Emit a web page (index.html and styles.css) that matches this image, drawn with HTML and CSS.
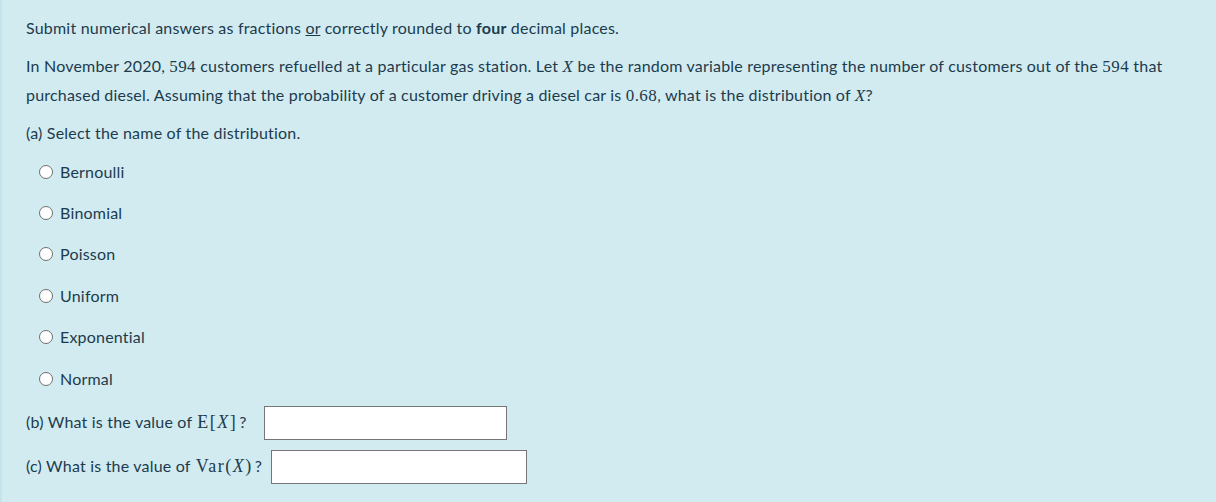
FILE: index.html
```html
<!DOCTYPE html>
<html>
<head>
<meta charset="utf-8">
<link rel="stylesheet" href="styles.css">
</head>
<body>
<div class="panel">
  <p class="line first">Submit numerical answers as fractions <u>or</u> correctly rounded to <b>four</b> decimal places.</p>
  <p class="para">In November 2020, <span class="m">594</span> customers refuelled at a particular gas station. Let <span class="m i">X</span> be the random variable representing the number of customers out of the <span class="m">594</span> that<br>purchased diesel. Assuming that the probability of a customer driving a diesel car is <span class="m">0.68</span>, what is the distribution of <span class="m i">X</span>?</p>
  <p class="line">(a) Select the name of the distribution.</p>
  <ul class="options">
    <li><span class="radio"></span><span>Bernoulli</span></li>
    <li><span class="radio"></span><span>Binomial</span></li>
    <li><span class="radio"></span><span>Poisson</span></li>
    <li><span class="radio"></span><span>Uniform</span></li>
    <li><span class="radio"></span><span>Exponential</span></li>
    <li><span class="radio"></span><span>Normal</span></li>
  </ul>
  <div class="q qb"><span class="qt">(b) What is the value of <span class="m qm">E[<span class="i">X</span>]</span>?</span><span class="box w1"></span></div>
  <div class="q qc"><span class="qt">(c) What is the value of <span class="m qm">Var(<span class="i">X</span>)</span>?</span><span class="box w2"></span></div>
</div>
</body>
</html>
```
FILE: styles.css
```css
html, body { margin: 0; padding: 0; }
body {
  width: 1216px;
  height: 502px;
  overflow: hidden;
  background: #d1ebf1;
  font-family: "Lato", "Noto Sans", sans-serif;
  font-size: 16px;
  letter-spacing: 0.2px;
  color: #1d3b4d;
}
.panel {
  box-sizing: border-box;
  height: 502px;
  border-left: 2px solid #c3e4ec;
  padding: 14px 0 0 24px;
}
p { margin: 0; }
.line { line-height: 28px; }
.first { margin-bottom: 10px; }
.para { line-height: 28px; white-space: nowrap; margin-bottom: 9px; }
b { font-weight: 700; }
.m { font-family: "Liberation Serif", "DejaVu Serif", serif; font-size: 17px; letter-spacing: 0.4px; }
.qm { font-size: 18px; letter-spacing: 1.5px; margin: 0 2px 0 1px; }
.i { font-style: italic; }
.options { list-style: none; margin: 4px 0 0 0; padding: 0 0 0 13px; }
.options li {
  height: 41.4px;
  display: flex;
  align-items: center;
  line-height: 20px;
}
.radio {
  width: 12px; height: 12px;
  border: 1px solid #6f6f6f;
  border-radius: 50%;
  background: #fff;
  margin-right: 7px;
  flex: none;
}
.q { display: flex; align-items: center; height: 35px; }
.qb { margin-top: 6px; }
.qc { margin-top: 9px; }
.box {
  display: inline-block;
  box-sizing: border-box;
  height: 34px;
  background: #fff;
  border: 1px solid #767676;
  flex: none;
}
.w1 { width: 243px; margin-left: 17px; }
.w2 { width: 256px; margin-left: 9px; }
```
